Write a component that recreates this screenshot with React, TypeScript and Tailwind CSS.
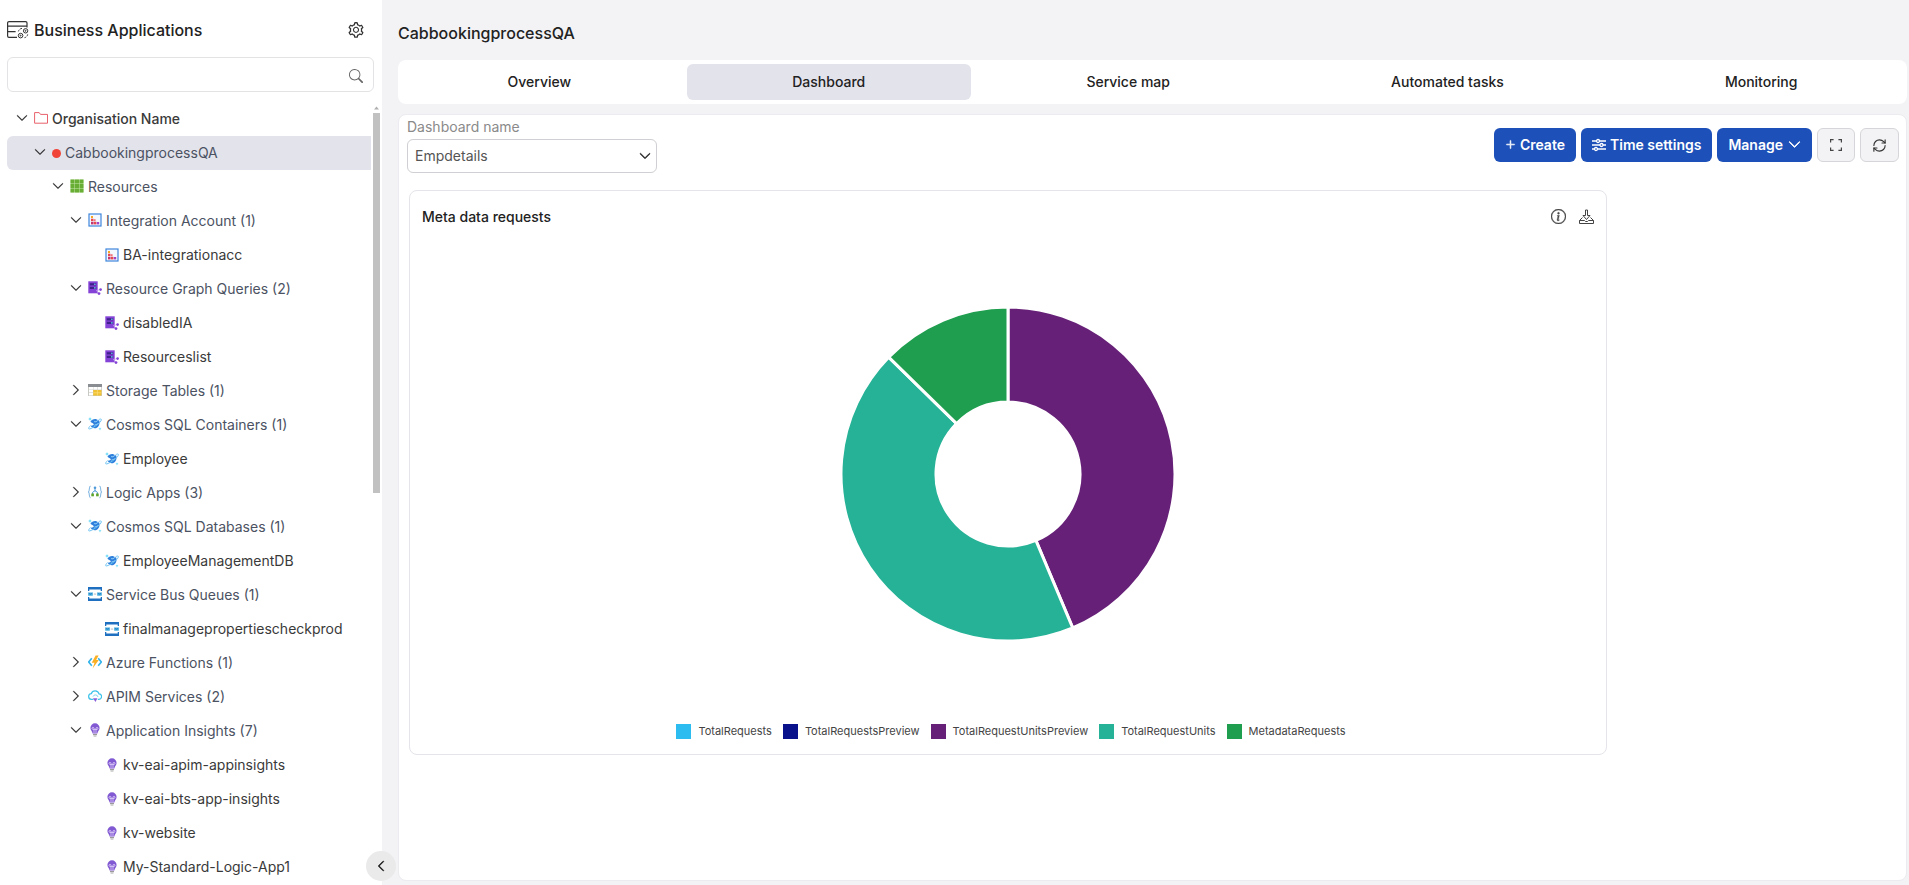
import { useState, type ReactNode } from "react";
import { BsChevronDown, BsChevronRight, BsChevronLeft, BsSearch, BsPlusLg, BsInfoCircle } from "react-icons/bs";
import { AiOutlineSetting } from "react-icons/ai";
import { RefreshCw } from "lucide-react";

type IconName =
  | "folder" | "dot" | "grid" | "integration" | "graph" | "table" | "cosmos"
  | "logic" | "bus" | "function" | "apim" | "insights";

type TreeRow = { label: string; level: number; icon: IconName; open?: boolean };

const rows: TreeRow[] = [
  { label: "Organisation Name", level: 0, icon: "folder", open: true },
  { label: "CabbookingprocessQA", level: 1, icon: "dot", open: true },
  { label: "Resources", level: 2, icon: "grid", open: true },
  { label: "Integration Account (1)", level: 3, icon: "integration", open: true },
  { label: "BA-integrationacc", level: 4, icon: "integration" },
  { label: "Resource Graph Queries (2)", level: 3, icon: "graph", open: true },
  { label: "disabledIA", level: 4, icon: "graph" },
  { label: "Resourceslist", level: 4, icon: "graph" },
  { label: "Storage Tables (1)", level: 3, icon: "table", open: false },
  { label: "Cosmos SQL Containers (1)", level: 3, icon: "cosmos", open: true },
  { label: "Employee", level: 4, icon: "cosmos" },
  { label: "Logic Apps (3)", level: 3, icon: "logic", open: false },
  { label: "Cosmos SQL Databases (1)", level: 3, icon: "cosmos", open: true },
  { label: "EmployeeManagementDB", level: 4, icon: "cosmos" },
  { label: "Service Bus Queues (1)", level: 3, icon: "bus", open: true },
  { label: "finalmanagepropertiescheckprod", level: 4, icon: "bus" },
  { label: "Azure Functions (1)", level: 3, icon: "function", open: false },
  { label: "APIM Services (2)", level: 3, icon: "apim", open: false },
  { label: "Application Insights (7)", level: 3, icon: "insights", open: true },
  { label: "kv-eai-apim-appinsights", level: 4, icon: "insights" },
  { label: "kv-eai-bts-app-insights", level: 4, icon: "insights" },
  { label: "kv-website", level: 4, icon: "insights" },
  { label: "My-Standard-Logic-App1", level: 4, icon: "insights" },
];

const indents = ["pl-[9px]", "pl-[27px]", "pl-[45px]", "pl-[63px]", "pl-[98px]"];

const drawings: Record<Exclude<IconName, "dot">, ReactNode> = {
  folder: (
    <path d="M.6 1.6h4.6l1.3 1.8h7v8.8H.6z" fill="none" stroke="#e8606c" strokeWidth="1" strokeLinejoin="round" />
  ),
  grid: (
    <>
      <rect x="0.5" y="0.5" width="13" height="13" fill="#c6e6ab" />
      {[0.5, 5, 9.5].map((y) =>
        [0.5, 5, 9.5].map((x) => <rect key={`${x}-${y}`} x={x} y={y} width="4" height="4" fill="#68ae35" />),
      )}
    </>
  ),
  integration: (
    <>
      <rect x="1" y="1" width="12" height="12" fill="#f4f8ff" stroke="#3f86dc" strokeWidth="1.2" />
      <rect x="3" y="3" width="2" height="2" fill="#f5a623" />
      <rect x="3" y="5.7" width="2.4" height="2.4" fill="#e5484d" />
      <rect x="5.6" y="6.2" width="2" height="2" fill="#f0717a" />
      <rect x="3" y="8.8" width="2.6" height="2.6" fill="#c2356f" />
      <rect x="6" y="8.8" width="2.4" height="2.6" fill="#e5484d" />
      <rect x="8.8" y="9" width="2.4" height="2.4" fill="#a243c4" />
    </>
  ),
  graph: (
    <>
      <rect x="0.3" y="0.3" width="9.4" height="12" fill="#8442d6" />
      <rect x="1.8" y="2.2" width="6.4" height="2.2" fill="#40208a" />
      <rect x="1.8" y="5.8" width="6.4" height="2.2" fill="#40208a" />
      <circle cx="6.9" cy="3.3" r="0.8" fill="#5fe0f5" />
      <circle cx="6.9" cy="6.9" r="0.8" fill="#5fe0f5" />
      <path d="M8.5 9.5l4-1M8.5 9.5l2.5 3" stroke="#c7a6ee" strokeWidth="0.8" />
      <circle cx="12.6" cy="8.6" r="1.3" fill="#8442d6" />
      <circle cx="11" cy="12.6" r="1.4" fill="#8442d6" />
    </>
  ),
  table: (
    <>
      <rect x="0" y="1" width="14" height="3" fill="#8a8d91" />
      <rect x="0" y="4" width="14" height="9" fill="#c9c9c4" />
      <rect x="1" y="4" width="4" height="2.6" fill="#fff" />
      <rect x="5.4" y="4" width="3.8" height="2.6" fill="#fff" />
      <rect x="9.6" y="4" width="3.6" height="2.6" fill="#fff" />
      <rect x="1" y="7" width="4" height="2.4" fill="#fff" />
      <rect x="1" y="10" width="4" height="2.4" fill="#fff" />
      <rect x="5.2" y="7" width="8.300" height="5.6" fill="#f0c232" />
      <path d="M9.4 7v5.6M5.2 9.800h8.300" stroke="#fbe08a" strokeWidth="0.6" />
    </>
  ),
  cosmos: (
    <>
      <path d="M2.400 4.800C3.600 2.400 6 1.800 8.400 2.200l3 1.600c.6 3.400-.4 6.200-3.400 7.400-2.400.6-4.600-.4-5.400-2.600 1.600.2 2.800-.2 3.200-1.400-.8-1.200-2-1.400-3.400-2.400z" fill="#2f80dc" />
      <path d="M6.200 4.600c1.400.6 2.600-.2 3.600-1.200M6.400 8.200c1.200-.8 2.400-.4 3.600-1.600" stroke="#9bd8fa" strokeWidth="1" fill="none" />
      <path d="M10.600 2.800c1.600-1 2.800-1 2.800-.2 0 1.800-3 4.400-6 6.400S1 12.800.700 11.600c-.2-.7.600-1.800 1.800-3" stroke="#6fc3f2" strokeWidth="1" fill="none" />
      <path d="M2 0l.6 1.600L4 2l-1.400.5L2 4l-.5-1.500L0 2l1.500-.4zM12 10.200l.4 1.200 1.200.4-1.200.5-.4 1.200-.4-1.200-1.200-.5 1.200-.4z" fill="#4fd3f7" />
    </>
  ),
  logic: (
    <>
      <path d="M2.6 1C.4 1.4 2.2 5.8.4 7c1.8 1.2 0 5.6 2.2 6M11.4 1c2.2.4.4 4.8 2.2 6-1.8 1.2 0 5.6-2.2 6" stroke="#86b9e2" strokeWidth="1.1" fill="none" />
      <path d="M7 3v3.5M4.6 9.5V7.3L7 5.6l2.4 1.7v2.2" stroke="#4f9bd9" strokeWidth="1" fill="none" />
      <circle cx="7" cy="2.8" r="1.3" fill="#4f9bd9" />
      <rect x="3.3" y="8.5" width="2.6" height="2.8" fill="#5ea32c" />
      <rect x="8.1" y="8.5" width="2.6" height="2.8" fill="#5ea32c" />
    </>
  ),
  bus: (
    <>
      <path d="M0 0h14v4h-1.300V2.600H1.300V4H0zM0 14h14v-4h-1.300v1.400H1.300V10H0z" fill="#1f6fc0" />
      <rect x="0.2" y="5.5" width="4.6" height="3.2" fill="#3fa9dc" />
      <rect x="9.2" y="5.5" width="4.6" height="3.2" fill="#3fa9dc" />
      <rect x="5.8" y="6.5" width="2.4" height="1.2" fill="#c3c6ca" />
      <path d="M.8 6l1.700 1.300L4.200 6M9.800 6l1.700 1.300L13.200 6" stroke="#1f6fc0" strokeWidth="0.6" fill="none" />
    </>
  ),
  function: (
    <>
      <path d="M3.8 3.2L.7 7l3.1 3.8M10.2 3.2L13.3 7l-3.1 3.8" stroke="#35b4ea" strokeWidth="1.6" fill="none" />
      <path d="M7.6.4h3L8.2 5h2.6L4.6 13.6 6.5 7.8H3.7z" fill="#fbb024" />
    </>
  ),
  apim: (
    <>
      <path d="M5.5 10.3H3.6A2.8 2.8 0 013.3 4.7 4 4 0 0111 4.9a2.7 2.7 0 01-.3 5.4H9.8" stroke="#3ec3ea" strokeWidth="1.2" fill="none" />
      <path d="M5 7.6a2.6 2.6 0 015 .4" stroke="#7fd8f2" strokeWidth="1" fill="none" />
      <path d="M5 9.2h4.4L7.5 13z" fill="#8b5fd6" />
    </>
  ),
  insights: (
    <>
      <path d="M7 .3a4.600 4.600 0 00-4.600 4.600c0 2.500 2 3 2.200 5.600h4.800c.2-2.600 2.200-3.100 2.200-5.600A4.600 4.600 0 007 .3z" fill="#8159d2" />
      <path d="M6 10V5.400a1 1 0 10-1.200 1h4.400a1 1 0 10-1.200-1V10" stroke="#e3d5fb" strokeWidth="0.8" fill="none" />
      <rect x="5" y="11" width="4" height="1.2" fill="#9a9a9a" />
      <rect x="5.6" y="12.5" width="2.8" height="1.1" fill="#b5b5b5" />
    </>
  ),
};

function TreeIcon({ name, raised }: { name: IconName; raised: boolean }) {
  if (name === "dot") return <span className="size-[9px] shrink-0 rounded-full bg-[#f04438]" />;
  return (
    <span className={`shrink-0 ${raised ? "pb-[3px]" : ""}`}>
      <svg viewBox="0 0 14 14" className="size-[14px]" aria-hidden="true">
        {drawings[name]}
      </svg>
    </span>
  );
}

function TreeItem({ row, selected, onSelect }: { row: TreeRow; selected: boolean; onSelect: () => void }) {
  const branch = row.open !== undefined;
  const tone = row.level === 0 ? "font-medium text-[#3a3a3a]" : branch ? "text-[#4b5262]" : "text-[#3a3a3a]";
  return (
    <li>
      <button
        type="button"
        aria-expanded={row.open}
        onClick={onSelect}
        className={`flex h-[34px] w-full items-center text-left whitespace-nowrap ${indents[row.level]} ${
          selected ? "rounded-l-md bg-[#e3e3ec]" : ""
        }`}
      >
        <span className="flex items-center gap-[6px]">
          {branch && (
            <span className="flex w-[12px] shrink-0 justify-center pb-[3px] text-[#222]">
              {row.open ? <BsChevronDown size={12} strokeWidth={0.6} /> : <BsChevronRight size={12} strokeWidth={0.6} />}
            </span>
          )}
          <TreeIcon name={row.icon} raised={branch} />
        </span>
        <span className={`pb-[1px] pl-[4px] text-[14px] ${tone}`}>{row.label}</span>
      </button>
    </li>
  );
}

function AppsIcon() {
  return (
    <svg viewBox="0 0 22 18" className="h-[18px] w-[22px] shrink-0" fill="none" stroke="#333" strokeWidth="1.2" aria-hidden="true">
      <path d="M10 16.4H2A1.4 1.4 0 01.6 15V2A1.4 1.4 0 012 .6h16.6A1.4 1.4 0 0120 2v4.500M.6 5.200H20M.6 10.700h8" />
      <g strokeWidth="1">
        <circle cx="13.6" cy="14.6" r="2.3" />
        <circle cx="18.6" cy="9.8" r="2.2" />
        <circle cx="13.6" cy="14.6" r=".5" />
        <circle cx="18.6" cy="9.8" r=".5" />
        <path d="M11.4 10.4a4 4 0 013.6-3M20.7 13.4a4 4 0 01-3.2 3.300" strokeDasharray="2 1" />
      </g>
    </svg>
  );
}

function Sidebar() {
  const [selected, setSelected] = useState(1);
  return (
    <aside className="relative flex w-[382px] shrink-0 flex-col bg-white">
      <header className="flex h-[57px] items-center gap-[5px] pt-[3px] pr-[17px] pl-[7px]">
        <AppsIcon />
        <h1 className="grow text-[16px] font-medium text-[#222]">Business Applications</h1>
        <button type="button" aria-label="Settings">
          <AiOutlineSetting size={18} color="#333" />
        </button>
      </header>
      <div className="pr-[8px] pl-[7px]">
        <label className="flex h-[35px] items-center rounded-md border border-[#e3e3e6] pt-[3px] pr-[10px] pl-3">
          <input type="text" aria-label="Search applications" className="min-w-0 grow text-[14px] outline-none" />
          <BsSearch size={14} color="#666" />
        </label>
      </div>
      <div className="flex min-h-0 grow pt-[10px]">
        <ul className="min-w-0 grow overflow-hidden pl-[7px]">
          {rows.map((row, i) => (
            <TreeItem key={i} row={row} selected={i === selected} onSelect={() => setSelected(i)} />
          ))}
        </ul>
        <div className="flex w-[11px] flex-col items-center pt-[4px] pr-[2px] pl-[2px]" aria-hidden="true">
          <svg viewBox="0 0 7 4" className="mb-[3px] h-[4px] w-[5px]">
            <path d="M0 4L3.5 0 7 4z" fill="#b0b0b0" />
          </svg>
          <div className="h-[380px] w-[7px] bg-[#c1c1c1]" />
        </div>
      </div>
      <button
        type="button"
        aria-label="Collapse sidebar"
        className="absolute right-[-14px] bottom-[4px] flex size-[30px] items-center justify-center rounded-full bg-[#eaeaea]"
      >
        <BsChevronLeft size={12} color="#111" strokeWidth={1} />
      </button>
    </aside>
  );
}

const tabs = ["Overview", "Dashboard", "Service map", "Automated tasks", "Monitoring"];

function Tabs() {
  const [active, setActive] = useState("Dashboard");
  return (
    <div role="tablist" className="flex h-[44px] shrink-0 gap-[10px] rounded-lg bg-white p-[4px]">
      {tabs.map((tab) => (
        <button
          key={tab}
          type="button"
          role="tab"
          aria-selected={tab === active}
          onClick={() => setActive(tab)}
          className={`flex-auto rounded-md pb-[1px] text-[14px] font-medium text-[#222] ${tab === active ? "bg-[#e3e3ec]" : ""}`}
        >
          {tab}
        </button>
      ))}
    </div>
  );
}

const series = [
  { name: "TotalRequests", color: "#2cbcf0", value: 0 },
  { name: "TotalRequestsPreview", color: "#09118b", value: 0 },
  { name: "TotalRequestUnitsPreview", color: "#662078", value: 157.2 },
  { name: "TotalRequestUnits", color: "#25b296", value: 157.2 },
  { name: "MetadataRequests", color: "#1e9e4e", value: 45.6 },
];

function Donut() {
  const total = series.reduce((sum, s) => sum + s.value, 0);
  const outer = 167;
  const inner = 72;
  const at = (r: number, turn: number) => {
    const a = turn * 2 * Math.PI;
    return `${(r * Math.sin(a)).toFixed(2)} ${(-r * Math.cos(a)).toFixed(2)}`;
  };
  let turn = 0;
  return (
    <svg viewBox="-170 -170 340 340" className="size-[340px]" role="img" aria-label="Meta data requests">
      {series.filter((s) => s.value > 0).map((s) => {
        const start = turn;
        const end = turn + s.value / total;
        turn = end;
        const large = end - start > 0.5 ? 1 : 0;
        return (
          <path
            key={s.name}
            d={`M${at(outer, start)}A${outer} ${outer} 0 ${large} 1 ${at(outer, end)}L${at(inner, end)}A${inner} ${inner} 0 ${large} 0 ${at(inner, start)}Z`}
            fill={s.color}
            stroke="#fff"
            strokeWidth="3"
          />
        );
      })}
    </svg>
  );
}

function ChartCard() {
  return (
    <section className="mx-[10px] mt-[17px] flex h-[565px] w-4/5 max-w-[1198px] flex-col rounded-lg border border-[#e4e4ea]">
      <header className="flex h-[50px] shrink-0 items-center gap-[13px] pr-[12px] pl-[12px]">
        <h3 className="grow text-[14px] font-medium text-[#222]">Meta data requests</h3>
        <button type="button" aria-label="Information">
          <BsInfoCircle size={15} color="#444" strokeWidth={0.4} />
        </button>
        <button type="button" aria-label="Download">
          <svg viewBox="0 0 15 15" className="size-[15px]" fill="none" stroke="#444" strokeWidth="1" strokeLinejoin="round" aria-hidden="true">
            <path d="M6.500 1h2v5.500H11l-3.500 4-3.500-4h2.500z" />
            <path d="M3.500 8.500L.500 11.500v3h14v-3l-3-3M.500 11.500h5l1 1h2l1-1h5" />
          </svg>
        </button>
      </header>
      <div className="flex grow items-center justify-center pb-[2px]">
        <Donut />
      </div>
      <ul className="flex h-[46px] shrink-0 items-center justify-center gap-[11px] pl-[6px]">
        {series.map((s) => (
          <li key={s.name} className="flex items-center gap-[7px] text-[11px] text-[#444]">
            <span className="size-[15px]" style={{ backgroundColor: s.color }} />
            {s.name}
          </li>
        ))}
      </ul>
    </section>
  );
}

function Toolbar() {
  const primary = "flex h-[34px] items-center rounded-md bg-[#1d50b8] px-[11px] pb-[1px] text-[14px] font-semibold text-white";
  const ghost = "flex h-[34px] items-center justify-center rounded-md border border-[#d6d6da] bg-[#f3f3f6]";
  return (
    <div className="flex items-center gap-[5px]">
      <button type="button" className={`${primary} gap-[4px]`}>
        <BsPlusLg size={11} strokeWidth={1} />
        Create
      </button>
      <button type="button" className={`${primary} gap-[4px]`}>
        <svg viewBox="0 0 14 14" className="size-[14px]" fill="none" stroke="#fff" strokeWidth="1.3" aria-hidden="true">
          <path d="M0 3h4.500M7.500 3H14M0 7h8M11 7h3M0 11h2.500M5.500 11H14" />
          <circle cx="6" cy="3" r="1.5" />
          <circle cx="9.5" cy="7" r="1.5" />
          <circle cx="4" cy="11" r="1.5" />
        </svg>
        Time settings
      </button>
      <button type="button" className={`${primary} gap-[5px]`}>
        Manage
        <BsChevronDown size={13} strokeWidth={1} />
      </button>
      <button type="button" aria-label="Full screen" className={`${ghost} w-[38px]`}>
        <svg viewBox="0 0 12 12" className="size-[12px]" fill="none" stroke="#444" strokeWidth="1.2" aria-hidden="true">
          <path d="M.6 3.600v-3h3M8.400.6h3v3M11.400 8.400v3h-3M3.600 11.400h-3v-3" />
        </svg>
      </button>
      <button type="button" aria-label="Refresh" className={`${ghost} w-[39px]`}>
        <RefreshCw size={15} strokeWidth={1.8} color="#333" />
      </button>
    </div>
  );
}

export default function App() {
  return (
    <div className="flex h-screen overflow-hidden bg-[#f3f3f6] font-['Inter',sans-serif]">
      <Sidebar />
      <main className="flex min-w-0 grow flex-col pr-[2px] pb-[4px] pl-[16px]">
        <h2 className="flex h-[60px] shrink-0 items-center pt-[6px] text-[16px] font-medium text-[#222]">
          CabbookingprocessQA
        </h2>
        <Tabs />
        <div className="mt-[10px] flex min-h-0 grow flex-col rounded-lg border border-[#ebebf0] bg-white">
          <div className="flex items-center justify-between pt-[2px] pr-[7px] pl-[8px]">
            <div className="flex flex-col">
              <label htmlFor="dashboard" className="text-[14px] leading-[20px] text-[#8a8a8a]">
                Dashboard name
              </label>
              <div className="relative mt-[2px]">
                <select
                  id="dashboard"
                  className="h-[34px] w-[250px] appearance-none rounded-md border border-[#cfcfd4] bg-white px-[7px] pb-[2px] text-[14px] text-[#555]"
                >
                  <option>Empdetails</option>
                </select>
                <BsChevronDown
                  size={12}
                  color="#222"
                  strokeWidth={1}
                  className="pointer-events-none absolute top-[11px] right-[6px]"
                />
              </div>
            </div>
            <Toolbar />
          </div>
          <ChartCard />
        </div>
      </main>
    </div>
  );
}
